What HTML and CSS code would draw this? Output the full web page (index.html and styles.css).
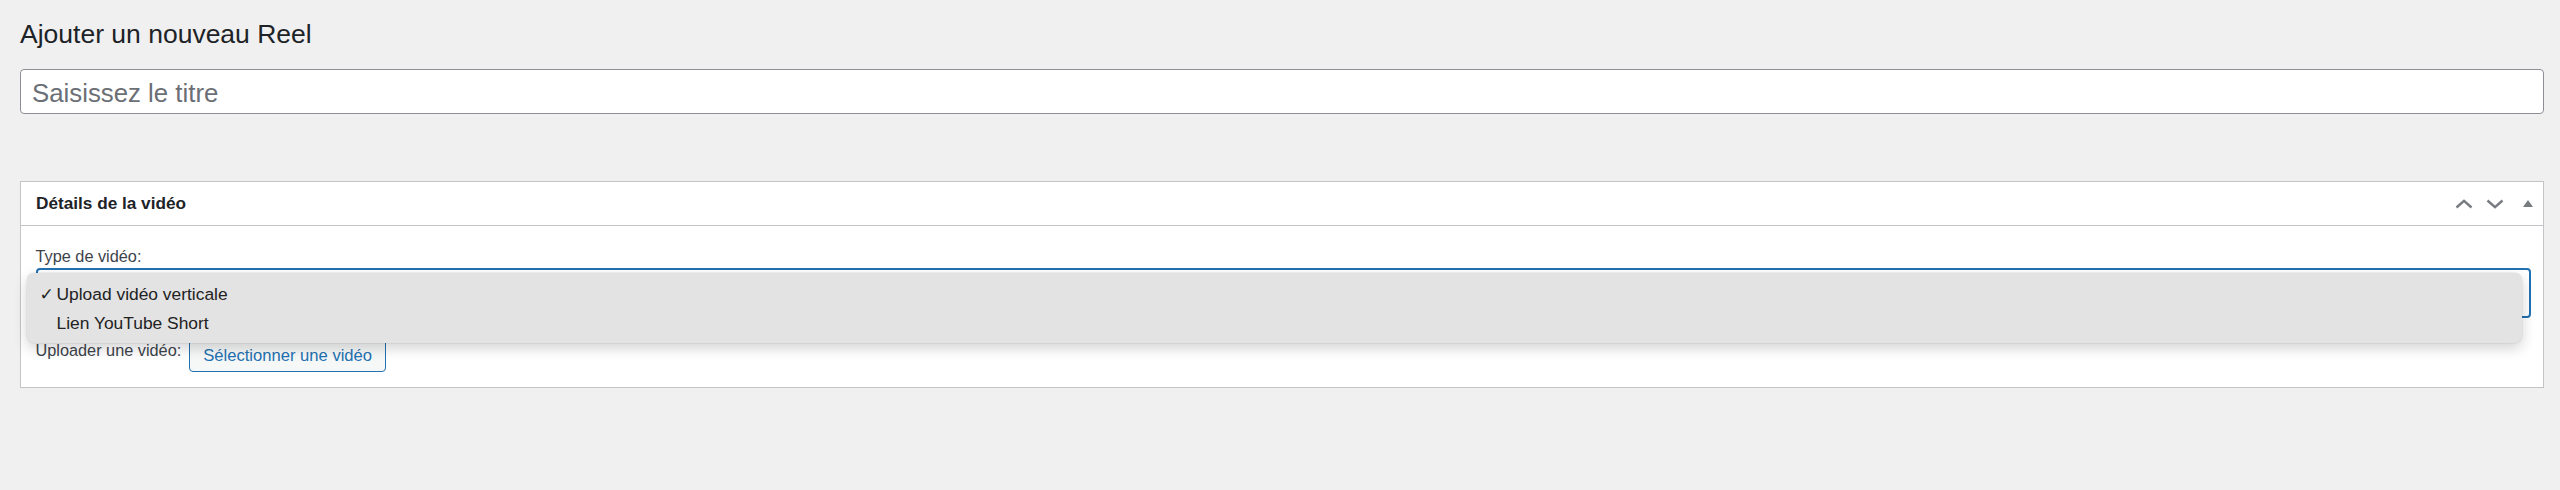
FILE: index.html
```html
<!DOCTYPE html>
<html lang="fr">
<head>
<meta charset="utf-8">
<title>Ajouter un nouveau Reel</title>
<link rel="stylesheet" href="styles.css">
</head>
<body>
<div class="wrap">
  <h1 class="page-title">Ajouter un nouveau Reel</h1>
  <div class="title-field">
    <input class="title-input" type="text" placeholder="Saisissez le titre">
  </div>
  <div class="postbox">
    <div class="postbox-header">
      <h2 class="hndle">Détails de la vidéo</h2>
      <div class="handle-actions">
        <span class="handle-btn btn-up">
          <svg width="18" height="10" viewBox="0 0 18 10"><polyline points="1.5,8.5 9,1.8 16.5,8.5" fill="none" stroke="#787c82" stroke-width="2.4"/></svg>
        </span>
        <span class="handle-btn btn-down">
          <svg width="18" height="10" viewBox="0 0 18 10"><polyline points="1.5,1.5 9,8.2 16.5,1.5" fill="none" stroke="#787c82" stroke-width="2.4"/></svg>
        </span>
        <span class="handle-btn btn-toggle">
          <svg width="10" height="7" viewBox="0 0 10 7"><polygon points="5,0 10,7 0,7" fill="#787c82"/></svg>
        </span>
      </div>
    </div>
    <div class="inside">
      <label class="field-label">Type de vidéo:</label>
      <div class="select-wrap">
        <div class="select-box"></div>
        <div class="dropdown">
          <div class="option"><span class="check">✓</span>Upload vidéo verticale</div>
          <div class="option"><span class="check"></span>Lien YouTube Short</div>
        </div>
      </div>
      <div class="upload-row">
        <span class="field-label">Uploader une vidéo:</span>
        <button class="button" type="button">Sélectionner une vidéo</button>
      </div>
    </div>
  </div>
</div>
</body>
</html>
```

FILE: styles.css
```css
html, body {
  margin: 0;
  padding: 0;
  background: #f0f0f1;
  font-family: "Liberation Sans", Arial, sans-serif;
  color: #3c434a;
}

.wrap {
  padding: 17px 16px 0 20px;
}

.page-title {
  margin: 0;
  font-size: 26.5px;
  font-weight: 400;
  line-height: 1.3;
  color: #1d2327;
}

.title-field {
  margin-top: 18px;
}

.title-input {
  display: block;
  box-sizing: border-box;
  width: 100%;
  height: 45px;
  margin: 0;
  padding: 3px 10px 0 11px;
  border: 1px solid #8c8f94;
  border-radius: 4px;
  background: #fff;
  font-family: "Liberation Sans", Arial, sans-serif;
  font-size: 25.8px;
  color: #1d2327;
  outline: none;
}

.title-input::placeholder {
  color: #6b6f75;
}

.postbox {
  margin-top: 67px;
  background: #fff;
  border: 1px solid #c3c4c7;
}

.postbox-header {
  display: flex;
  align-items: center;
  height: 43px;
  border-bottom: 1px solid #c3c4c7;
}

.hndle {
  flex: 1;
  margin: 0;
  padding-left: 15px;
  font-size: 17.2px;
  font-weight: 700;
  color: #1d2327;
  line-height: 1;
}

.handle-actions {
  display: flex;
  align-items: center;
  padding-right: 10px;
}

.handle-btn {
  display: flex;
  align-items: center;
  justify-content: center;
}

.handle-btn svg {
  display: block;
}

.btn-up {
  margin-right: 13px;
}

.btn-down {
  margin-right: 19px;
}

.inside {
  padding: 19px 12px 15px 14.5px;
}

.field-label {
  display: block;
  font-size: 16.3px;
  line-height: 22.75px;
  color: #3c434a;
}

.select-wrap {
  position: relative;
  margin-bottom: 21px;
}

.select-box {
  box-sizing: border-box;
  height: 50px;
  border: 2px solid #2271b1;
  border-radius: 4px;
  background: #fff;
}

.dropdown {
  position: absolute;
  left: -9px;
  top: 5px;
  width: 100%;
  box-sizing: border-box;
  padding: 7px 0 5px 13px;
  background: #e3e3e3;
  border-radius: 7px;
  box-shadow: 0 5px 14px rgba(0, 0, 0, 0.18), 0 0 0 0.5px rgba(0, 0, 0, 0.08);
}

.option {
  display: flex;
  align-items: baseline;
  font-size: 17.4px;
  line-height: 29px;
  color: #222;
}

.check {
  display: inline-block;
  width: 17px;
  font-family: "DejaVu Sans", sans-serif;
  font-size: 17px;
  font-weight: 700;
}

.upload-row {
  display: flex;
  align-items: flex-start;
}

.upload-row .field-label {
  margin-right: 8px;
}

.button {
  box-sizing: border-box;
  height: 33px;
  padding: 0 13px;
  border: 1px solid #2271b1;
  border-radius: 4px;
  background: #f6f7f7;
  color: #2271b1;
  font-family: "Liberation Sans", Arial, sans-serif;
  font-size: 16.6px;
  line-height: 31px;
  cursor: pointer;
}
```
